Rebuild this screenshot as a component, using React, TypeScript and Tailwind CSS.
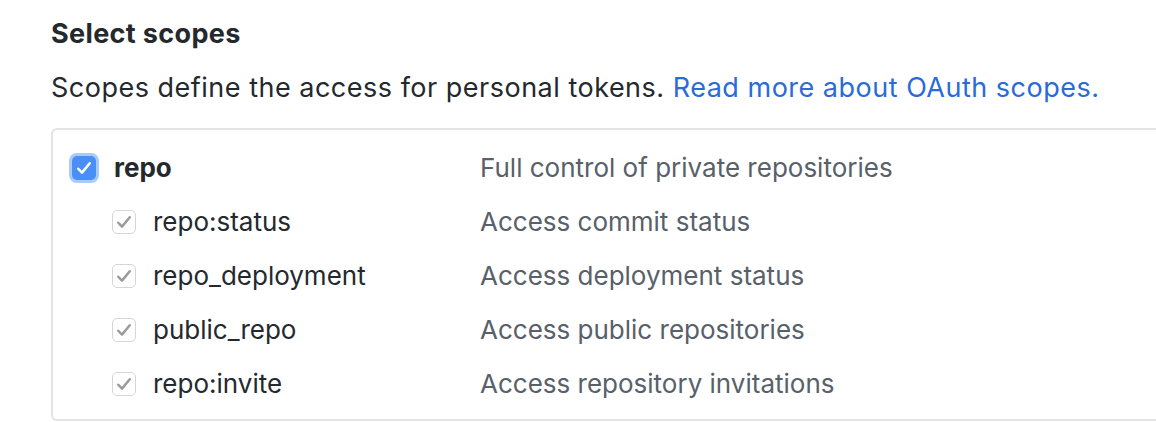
import React from "react";

type Scope = { name: string; description: string };

const children: Scope[] = [
  { name: "repo:status", description: "Access commit status" },
  { name: "repo_deployment", description: "Access deployment status" },
  { name: "public_repo", description: "Access public repositories" },
  { name: "repo:invite", description: "Access repository invitations" },
];

function CheckMark({ className }: { className: string }) {
  return (
    <svg viewBox="0 0 16 16" className={className} fill="none">
      <path d="M3.4 8.6l3 3.1L12.6 4.2" stroke="currentColor" strokeWidth="2" strokeLinecap="round" strokeLinejoin="round" />
    </svg>
  );
}

function ParentBox() {
  return (
    <span className="flex h-[24px] w-[24px] items-center justify-center rounded-[5px] bg-[#4a8ff5] ring-[3px] ring-[#a9cbfa] text-white">
      <CheckMark className="h-[20px] w-[20px]" />
    </span>
  );
}

function ChildBox() {
  return (
    <span className="flex h-[24px] w-[24px] items-center justify-center rounded-[5px] border border-[#d6d6d6] bg-white text-[#9b9b9b]">
      <CheckMark className="h-[20px] w-[20px]" />
    </span>
  );
}

export default function App() {
  return (
    <div className="min-h-screen bg-white pl-[51px] pt-[14px] text-[#24292e] [font-family:Inter,'Noto_Sans',sans-serif]">
      <h3 className="text-[27px] font-bold leading-[40px] tracking-[0.35px]">Select scopes</h3>
      <p className="mt-[14px] text-[27px] leading-[40px] tracking-[0.5px]">
        Scopes define the access for personal tokens.{" "}
        <a href="#" className="text-[#2a6bd8]">Read more about OAuth scopes.</a>
      </p>
      <div className="mt-[20px] h-[293px] rounded-l-[6px] border-[2px] border-r-0 border-[#e3e3e3] pt-[22px]">
        <div className="grid grid-cols-[427px_1fr] items-center">
          <div className="flex h-[32px] items-center gap-[18px] pl-[19px]">
            <ParentBox />
            <span className="text-[26px] font-bold leading-[32px]">repo</span>
          </div>
          <span className="text-[26px] leading-[32px] text-[#586069]">Full control of private repositories</span>
        </div>
        {children.map((s) => (
          <div key={s.name} className="mt-[22px] grid grid-cols-[427px_1fr] items-center">
            <div className="flex h-[32px] items-center gap-[17px] pl-[59px]">
              <ChildBox />
              <span className="text-[26px] leading-[32px]">{s.name}</span>
            </div>
            <span className="text-[26px] leading-[32px] text-[#586069]">{s.description}</span>
          </div>
        ))}
      </div>
    </div>
  );
}
